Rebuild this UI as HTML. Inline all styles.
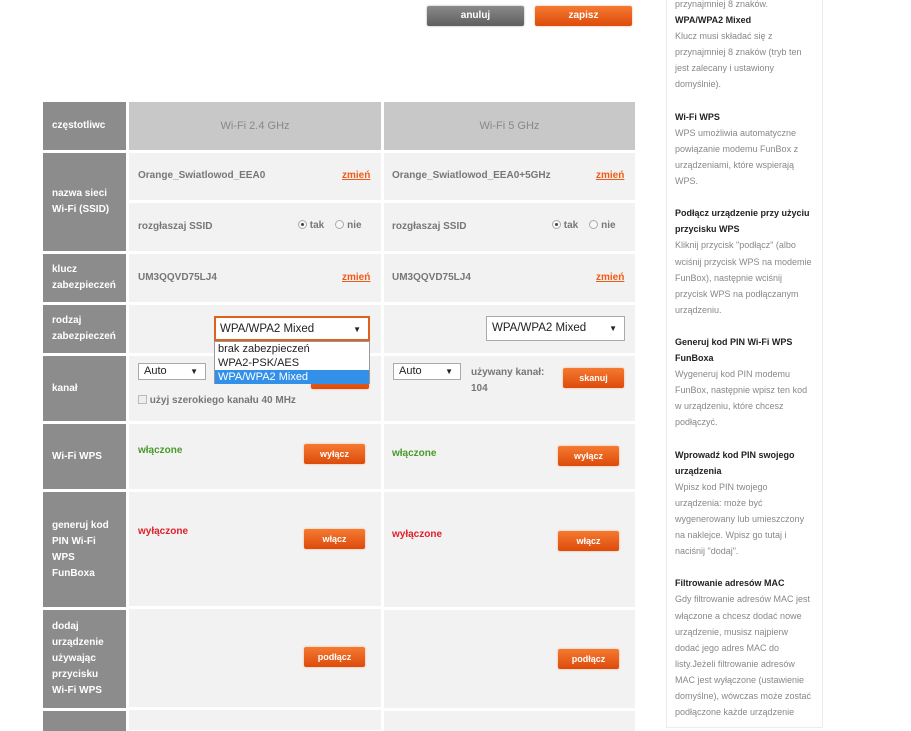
<!DOCTYPE html>
<html><head><meta charset="utf-8"><style>
*{margin:0;padding:0;box-sizing:border-box}
body{width:911px;height:720px;overflow:hidden;background:#fff;font-family:"Liberation Sans",Arial,sans-serif;position:relative}
.a{position:absolute}
.l{position:absolute;left:43px;width:83px;background:#8c8c8c;color:#fff;font-weight:bold;font-size:10px;line-height:16px;padding-left:9px;display:flex;align-items:center}
.c{position:absolute;background:#f2f2f2;font-size:10px;color:#777}
.c1{left:129px;width:252px}.c2{left:384px;width:251px}
.t{position:absolute;font-size:10px;color:#777;font-weight:bold}
.z{position:absolute;font-size:10px;color:#f05a14;text-decoration:underline;font-weight:bold}
.ob{position:absolute;height:20px;background:linear-gradient(#f57a30,#dd4b0c);color:#fff;font-weight:bold;font-size:9px;text-align:center;line-height:20px;border-radius:2px;box-shadow:0 0 2px #f7b08a}
.gb{position:absolute;height:20px;background:linear-gradient(#8a8a8a,#5e5e5e);color:#fff;font-weight:bold;font-size:10px;text-align:center;line-height:20px;border-radius:2px;box-shadow:0 0 2px #aaa}
.sel{position:absolute;background:#fff;border:1px solid #aaa;font-size:11.5px;color:#222;padding-left:5px;line-height:20px}
.sel b{position:absolute;right:7px;top:0;font-size:8px}
.side{position:absolute;left:666px;top:-2px;width:157px;height:730px;border:1px solid #ececec;border-top:none;padding:0 8px}
.side p{font-size:9px;line-height:16.1px;color:#888}
.side h{display:block;font-size:9px;line-height:16.1px;color:#222;font-weight:bold}
.radio{display:inline-block;width:9px;height:9px;border:1px solid #aaa;border-radius:50%;vertical-align:-1px;background:#f7f7f7;position:relative}
.radio.on:after{content:"";position:absolute;left:2px;top:2px;width:3px;height:3px;border-radius:50%;background:#444}
.hd{background:#c8c8c8;text-align:center;line-height:48px;color:#888;font-size:11px}
</style></head><body>
<div class="gb" style="left:427px;top:6px;width:97px">anuluj</div>
<div class="ob" style="left:535px;top:6px;width:97px;font-size:10px">zapisz</div>

<div class="l" style="top:102px;height:48px">częstotliwc</div>
<div class="c c1 hd" style="top:102px;height:48px">Wi-Fi 2.4 GHz</div>
<div class="c c2 hd" style="top:102px;height:48px">Wi-Fi 5 GHz</div>

<div class="l" style="top:153px;height:98px">nazwa sieci<br>Wi-Fi (SSID)</div>
<div class="c c1" style="top:153px;height:47px"></div>
<div class="c c2" style="top:153px;height:47px"></div>
<div class="c c1" style="top:203px;height:48px"></div>
<div class="c c2" style="top:203px;height:48px"></div>
<div class="t" style="left:138px;top:170px">Orange_Swiatlowod_EEA0</div>
<div class="z" style="left:342px;top:170px">zmień</div>
<div class="t" style="left:392px;top:170px">Orange_Swiatlowod_EEA0+5GHz</div>
<div class="z" style="left:596px;top:170px">zmień</div>
<div class="t" style="left:138px;top:221px">rozgłaszaj SSID</div>
<div class="t" style="left:298px;top:220px"><span class="radio on"></span> tak &nbsp;&nbsp; <span class="radio"></span> nie</div>
<div class="t" style="left:392px;top:221px">rozgłaszaj SSID</div>
<div class="t" style="left:552px;top:220px"><span class="radio on"></span> tak &nbsp;&nbsp; <span class="radio"></span> nie</div>

<div class="l" style="top:254px;height:48px">klucz<br>zabezpieczeń</div>
<div class="c c1" style="top:254px;height:48px"></div>
<div class="c c2" style="top:254px;height:48px"></div>
<div class="t" style="left:138px;top:272px">UM3QQVD75LJ4</div>
<div class="z" style="left:342px;top:272px">zmień</div>
<div class="t" style="left:392px;top:272px">UM3QQVD75LJ4</div>
<div class="z" style="left:596px;top:272px">zmień</div>

<div class="l" style="top:305px;height:48px">rodzaj<br>zabezpieczeń</div>
<div class="c c1" style="top:305px;height:48px"></div>
<div class="c c2" style="top:305px;height:48px"></div>
<div class="sel" style="left:486px;top:316px;width:139px;height:25px;line-height:23px">WPA/WPA2 Mixed<b>▼</b></div>

<div class="l" style="top:356px;height:65px">kanał</div>
<div class="c c1" style="top:356px;height:65px"></div>
<div class="c c2" style="top:356px;height:65px"></div>
<div class="sel" style="left:138px;top:363px;width:68px;height:17px;line-height:15px;font-size:11px">Auto<b>▼</b></div>
<div class="ob" style="left:311px;top:369px;width:58px">skanuj</div>
<div class="t" style="left:138px;top:395px"><span style="display:inline-block;width:9px;height:9px;border:1px solid #bbb;background:#eee;vertical-align:-1px"></span> użyj szerokiego kanału 40 MHz</div>
<div class="sel" style="left:393px;top:363px;width:68px;height:17px;line-height:15px;font-size:11px">Auto<b>▼</b></div>
<div class="t" style="left:471px;top:365px;line-height:16px">używany kanał:<br>104</div>
<div class="ob" style="left:563px;top:368px;width:61px">skanuj</div>

<div class="sel" style="left:214px;top:316px;width:156px;height:25px;line-height:23px;border:2px solid #e0601e;padding-left:4px">WPA/WPA2 Mixed<b>▼</b></div>
<div class="a" style="left:214px;top:341px;width:156px;height:43px;background:#fff;border:1px solid #999;font-size:11px;line-height:14px;color:#222">
<div style="padding-left:3px">brak zabezpieczeń</div><div style="padding-left:3px">WPA2-PSK/AES</div><div style="padding-left:3px;background:#3390e8;color:#fff">WPA/WPA2 Mixed</div></div>

<div class="l" style="top:424px;height:65px">Wi-Fi WPS</div>
<div class="c c1" style="top:424px;height:65px"></div>
<div class="c c2" style="top:424px;height:65px"></div>
<div class="t" style="left:138px;top:445px;color:#4a9a2a">włączone</div>
<div class="ob" style="left:304px;top:444px;width:61px">wyłącz</div>
<div class="t" style="left:392px;top:448px;color:#4a9a2a">włączone</div>
<div class="ob" style="left:558px;top:446px;width:61px">wyłącz</div>

<div class="l" style="top:492px;height:115px">generuj kod<br>PIN Wi-Fi<br>WPS<br>FunBoxa</div>
<div class="c c1" style="top:492px;height:114px"></div>
<div class="c c2" style="top:492px;height:115px"></div>
<div class="t" style="left:138px;top:526px;color:#e0202a">wyłączone</div>
<div class="ob" style="left:304px;top:529px;width:61px">włącz</div>
<div class="t" style="left:392px;top:529px;color:#e0202a">wyłączone</div>
<div class="ob" style="left:558px;top:531px;width:61px">włącz</div>

<div class="l" style="top:610px;height:98px">dodaj<br>urządzenie<br>używając<br>przycisku<br>Wi-Fi WPS</div>
<div class="c c1" style="top:609px;height:98px"></div>
<div class="c c2" style="top:610px;height:98px"></div>
<div class="ob" style="left:304px;top:647px;width:61px">podłącz</div>
<div class="ob" style="left:558px;top:649px;width:61px">podłącz</div>

<div class="l" style="top:711px;height:20px"></div>
<div class="c c1" style="top:710px;height:20px"></div>
<div class="c c2" style="top:711px;height:20px"></div>

<div class="side">
<p style="margin-top:-2px">przynajmniej 8 znaków.</p>
<h>WPA/WPA2 Mixed</h>
<p>Klucz musi składać się z przynajmniej 8 znaków (tryb ten jest zalecany i ustawiony domyślnie).</p>
<p>&nbsp;</p>
<h>Wi-Fi WPS</h>
<p>WPS umożliwia automatyczne powiązanie modemu FunBox z urządzeniami, które wspierają WPS.</p>
<p>&nbsp;</p>
<h>Podłącz urządzenie przy użyciu przycisku WPS</h>
<p>Kliknij przycisk "podłącz" (albo wciśnij przycisk WPS na modemie FunBox), następnie wciśnij przycisk WPS na podłączanym urządzeniu.</p>
<p>&nbsp;</p>
<h>Generuj kod PIN Wi-Fi WPS FunBoxa</h>
<p>Wygeneruj kod PIN modemu FunBox, następnie wpisz ten kod w urządzeniu, które chcesz podłączyć.</p>
<p>&nbsp;</p>
<h>Wprowadź kod PIN swojego urządzenia</h>
<p>Wpisz kod PIN twojego urządzenia: może być wygenerowany lub umieszczony na naklejce. Wpisz go tutaj i naciśnij "dodaj".</p>
<p>&nbsp;</p>
<h>Filtrowanie adresów MAC</h>
<p>Gdy filtrowanie adresów MAC jest włączone a chcesz dodać nowe urządzenie, musisz najpierw dodać jego adres MAC do listy.Jeżeli filtrowanie adresów MAC jest wyłączone (ustawienie domyślne), wówczas może zostać podłączone każde urządzenie</p>
</div>
</body></html>
